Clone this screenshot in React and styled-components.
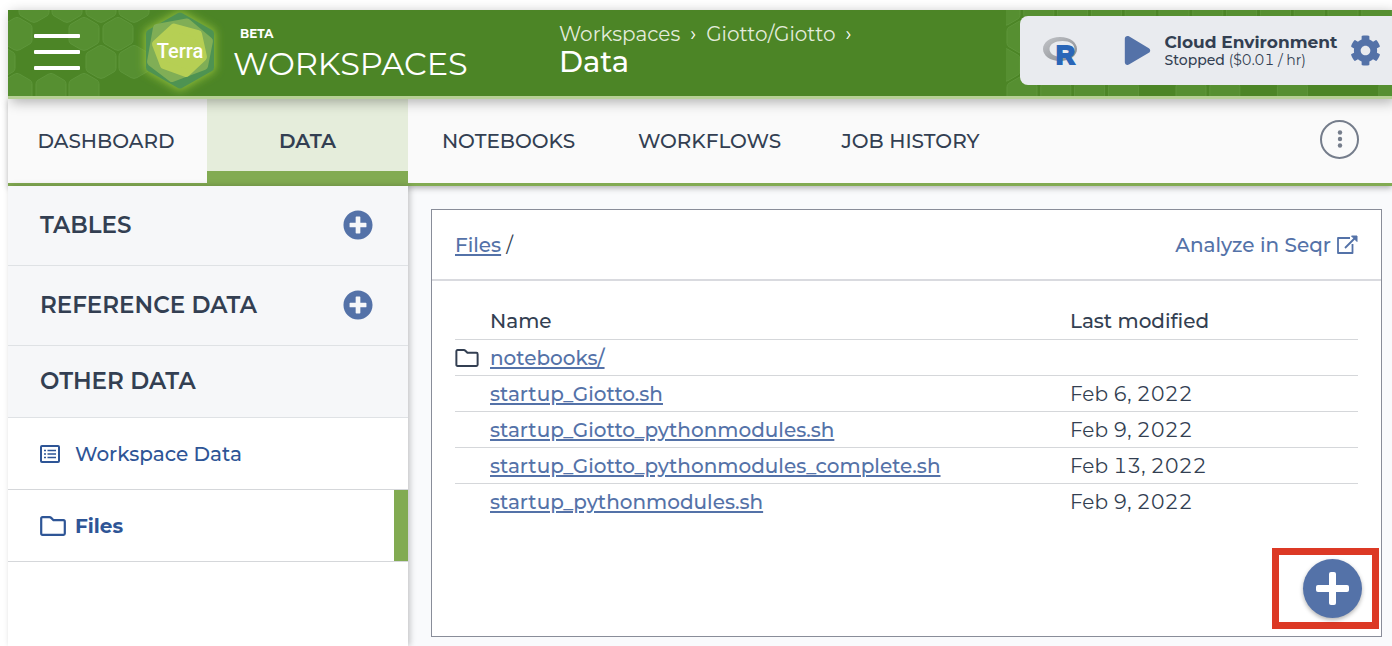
import React from 'react';
import styled, { createGlobalStyle, css } from 'styled-components';
import { FaCog, FaPlay, FaPlusCircle } from 'react-icons/fa';

const color = {
  header: '#4c8526',
  hex: '#568f31',
  hexEdge: '#5e963b',
  accent: '#82ab52',
  ink: '#333f52',
  link: '#5472a8',
  nav: '#2e5596',
  rule: '#d5d7da',
};

const GlobalStyle = createGlobalStyle`
  *, *::before, *::after { box-sizing: border-box; }
  body {
    margin: 0;
    background: #fff;
    color: ${color.ink};
    font-family: Montserrat, Inter, "Liberation Sans", sans-serif;
    font-size: 20px;
    line-height: 24px;
    font-variant-numeric: tabular-nums;
  }
  button { font: inherit; color: inherit; border: 0; background: none; padding: 0; cursor: pointer; }
  svg { display: block; flex: none; }
`;

const Page = styled.div`
  display: flex;
  flex-direction: column;
  min-height: 100vh;
  padding: 10px 0 0 8px;
`;

const Header = styled.header`
  position: relative;
  z-index: 2;
  display: flex;
  height: 89px;
  background: ${color.header};
  border-bottom: 3px solid #b7d096;
  box-shadow: 3px 3px 12px rgba(0, 0, 0, 0.3);
  color: #fff;
`;

const HexField = styled.svg`
  position: absolute;
  top: 0;
  ${(p) => (p.$side === 'right' ? 'right: 0;' : 'left: 0;')}
`;

const MenuButton = styled.button`
  position: relative;
  display: flex;
  flex-direction: column;
  justify-content: space-between;
  align-self: flex-start;
  width: 46px;
  height: 36px;
  margin: 24px 50px 0 26px;
`;

const MenuBar = styled.span`
  height: 4px;
  border-radius: 1px;
  background: #fff;
`;

const LogoLink = styled.a`
  position: relative;
  width: 100px;
  height: 86px;
`;

const Brand = styled.div`
  display: flex;
  flex-direction: column;
  width: 329px;
  padding: 16px 0 0 3px;
`;

const Beta = styled.span`
  padding-left: 7px;
  font-size: 12px;
  line-height: 16px;
  font-weight: 700;
`;

const BrandName = styled.span`
  font-size: 32px;
  line-height: 44px;
`;

const Crumbs = styled.nav`
  display: flex;
  flex: 1;
  flex-direction: column;
  padding-top: 12px;
`;

const CrumbPath = styled.div`
  display: flex;
  gap: 10px;
`;

const CrumbLink = styled.a`
  color: #e3ecdc;
  text-decoration: none;
`;

const CrumbTitle = styled.h1`
  margin: 0;
  font-size: 29px;
  line-height: 32px;
  font-weight: 500;
`;

const CloudPanel = styled.section`
  position: relative;
  display: flex;
  align-items: center;
  align-self: flex-start;
  width: 372px;
  height: 69px;
  margin-top: 6px;
  padding: 0 11px 0 22px;
  border-radius: 8px 0 0 8px;
  background: #e9ebef;
  color: ${color.ink};
`;

const IconButton = styled.button`
  display: flex;
  color: ${color.link};
`;

const CloudActions = styled.div`
  display: flex;
  align-items: center;
  justify-content: space-between;
  flex: 1;
  margin-left: 44px;
`;

const CloudText = styled.div`
  display: flex;
  flex-direction: column;
`;

const CloudTitle = styled.strong`
  font-size: 17px;
  line-height: 18px;
  font-weight: 700;
`;

const CloudStatus = styled.span`
  font-size: 14px;
  line-height: 18px;
  font-weight: 500;
`;

const CloudCost = styled.span`
  font-weight: 400;
`;

const TabBar = styled.nav`
  position: relative;
  z-index: 1;
  display: flex;
  align-items: stretch;
  height: 87px;
  padding-right: 33px;
  background: #fafafa;
  border-bottom: 3px solid ${color.accent};
  box-shadow: 0 2px 6px rgba(0, 0, 0, 0.3);
`;

const Tab = styled.a`
  display: flex;
  align-items: center;
  justify-content: center;
  width: 201px;
  color: ${color.ink};
  font-weight: 500;
  text-decoration: none;
  &:first-child { width: 199px; padding-right: 3px; }
  ${(p) =>
    p.$active &&
    css`
      padding: 12px 0 0;
      background: #e5eddb;
      border-bottom: 12px solid ${color.accent};
      font-weight: 600;
    `}
`;

const MoreButton = styled.button`
  display: flex;
  align-items: center;
  justify-content: center;
  align-self: center;
  width: 39px;
  height: 39px;
  margin: 0 0 4px auto;
  border: 2px solid #757d8b;
  border-radius: 50%;
  color: #757d8b;
`;

const Body = styled.div`
  display: flex;
  flex: 1;
`;

const Sidebar = styled.aside`
  position: relative;
  z-index: 1;
  width: 400px;
  background: #fff;
  box-shadow: 2px 0 6px rgba(0, 0, 0, 0.22);
`;

const SideHeading = styled.div`
  display: flex;
  align-items: center;
  justify-content: space-between;
  height: ${(p) => (p.$compact ? 72 : 80)}px;
  padding: 0 35px 2px 32px;
  background: #f6f7f9;
  border-bottom: 1px solid #dfe2e5;
`;

const SideTitle = styled.h2`
  margin: 0;
  font-size: 23px;
  line-height: 28px;
  font-weight: 600;
`;

const SideItem = styled.a`
  display: grid;
  grid-template-columns: 35px 1fr;
  align-items: center;
  height: 72px;
  padding-left: 32px;
  border-bottom: 1px solid ${color.rule};
  background: ${(p) => (p.$active ? `linear-gradient(${color.accent}, ${color.accent}) right / 14px 100% no-repeat` : 'none')};
  color: ${color.nav};
  font-weight: ${(p) => (p.$active ? 700 : 500)};
  text-decoration: none;
`;

const Main = styled.main`
  display: flex;
  flex: 1;
  padding: 23px 10px 9px 23px;
  background: #f9fafc;
`;

const Panel = styled.section`
  position: relative;
  flex: 1;
  border: 1px solid #898d99;
  background: #fff;
`;

const PanelHead = styled.div`
  display: flex;
  align-items: center;
  justify-content: space-between;
  height: 71px;
  padding: 0 23px;
  border-bottom: 2px solid #d9dadf;
`;

const TextLink = styled.a`
  color: ${color.link};
  font-weight: 500;
  text-decoration-thickness: 2px;
  text-underline-offset: 2px;
`;

const SeqrLink = styled.a`
  display: flex;
  align-items: center;
  gap: 6px;
  color: ${color.link};
  font-weight: 500;
  text-decoration: none;
`;

const TableArea = styled.div`
  padding: 22px 23px 100px;
`;

const FileTable = styled.table`
  width: 100%;
  border-collapse: collapse;
  table-layout: fixed;
`;

const FileRow = styled.tr`
  height: 36px;
  & + & { border-top: 1px solid ${color.rule}; }
`;

const Cell = styled.td`
  padding: 1px 0 0;
  text-align: left;
`;

const ColHead = styled.th`
  width: ${(p) => p.$width || 'auto'};
  height: 36px;
  padding: 0;
  border-bottom: 1px solid ${color.rule};
  text-align: left;
  font-weight: 500;
`;

const Highlight = styled.div`
  position: absolute;
  right: 2px;
  bottom: 7px;
  display: flex;
  align-items: center;
  justify-content: flex-end;
  width: 107px;
  height: 81px;
  padding-right: 10px;
  border: 7px solid #dc3925;
`;

const AddButton = styled.button`
  display: flex;
  align-items: center;
  justify-content: center;
  width: 59px;
  height: 59px;
  border-radius: 50%;
  background: ${color.link};
  box-shadow: 0 2px 4px rgba(0, 0, 0, 0.3);
`;

const HEX = 'M0 -16.5 Q1.5 -16.5 3 -15.6 L13 -9.8 Q15 -8.6 15 -6.4 V6.4 Q15 8.6 13 9.8 L3 15.6 Q0 17.2 -3 15.6 L-13 9.8 Q-15 8.6 -15 6.4 V-6.4 Q-15 -8.6 -13 -9.8 L-3 -15.6 Q-1.5 -16.5 0 -16.5 Z';

const leftHexes = [
  [26, -4], [59, -4], [93, -4], [126, -4],
  [9, 24], [76, 24], [110, 24],
  [-8, 52], [93, 52], [126, 52],
  [9, 80], [43, 80], [76, 80],
];

const rightHexes = [
  ...Array.from({ length: 13 }, (_, i) => [-1 + i * 33.8, -1]),
  [16, 27], [-1, 55],
  ...[0, 1, 2, 3, 5, 6, 8, 11].map((i) => [16 + i * 33.8, 83]),
];

function Hexes({ side, width, cells }) {
  return (
    <HexField $side={side} width={width} height="86" aria-hidden="true">
      {cells.map(([x, y]) => (
        <path key={`${x},${y}`} d={HEX} transform={`translate(${x} ${y})`} fill={color.hex} stroke={color.hexEdge} />
      ))}
    </HexField>
  );
}

function TerraLogo() {
  return (
    <svg width="100" height="86" viewBox="130 10 100 86" role="img" aria-label="Terra">
      <defs>
        <filter id="glow" x="-30%" y="-30%" width="160%" height="160%">
          <feGaussianBlur stdDeviation="4.5" />
        </filter>
      </defs>
      <path d="M180 13 213 32V69L180 88 147 69V32Z" fill="#8fbb38" stroke="#8fbb38" strokeWidth="5" strokeLinejoin="round" filter="url(#glow)" />
      <g strokeLinejoin="round" strokeWidth="8">
        <path d="M180 16.500 210 33.500V67.500L180 84.500 150 67.500V33.500Z" fill="#4e9352" stroke="#4e9352" />
        <path d="M187 22.500 209 41 204 66 172 78 151 62 157 28Z" fill="#80ae56" stroke="#80ae56" />
        <path d="M174 27.500 198 34 203 57 186 73 164 65 156 44Z" fill="#b6cf54" stroke="#b6cf54" />
      </g>
      <text x="180" y="58" textAnchor="middle" fill="#fff" fontFamily="Roboto, sans-serif" fontSize="20" fontWeight="500">Terra</text>
    </svg>
  );
}

function RLogo() {
  return (
    <svg width="37" height="40" viewBox="0 -5 37 40" role="img" aria-label="R">
      <defs>
        <linearGradient id="ring" x1="0" y1="0" x2="1" y2="1">
          <stop offset="0" stopColor="#c3c5c9" />
          <stop offset="1" stopColor="#85888d" />
        </linearGradient>
      </defs>
      <path fillRule="evenodd" fill="url(#ring)" d="M18 1C8 1 1 6.500 1 13S8 25 18 25 35 19.500 35 13 28 1 18 1ZM20.500 5C28 5 32.500 8 32.500 13S28 21 20.500 21 7.500 18 7.500 13 13 5 20.500 5Z" />
      <text x="14" y="28" fill="#2a66b8" stroke="#2a66b8" strokeWidth="2" fontFamily="Liberation Sans, sans-serif" fontSize="26" fontWeight="700">R</text>
    </svg>
  );
}

function FolderIcon({ width, height }) {
  return (
    <svg width={width} height={height} viewBox="0 0 26 20" fill="none" stroke="currentColor" strokeWidth="2.200" strokeLinejoin="round" aria-hidden="true">
      <path d="M1.200 2.500Q1.200 1.200 2.500 1.200H9.500Q10.500 1.200 11.200 1.900L13.500 4.200H23.500Q24.800 4.200 24.800 5.700V17.500Q24.800 18.800 23.500 18.800H2.500Q1.200 18.800 1.200 17.500Z" />
    </svg>
  );
}

function ListIcon() {
  return (
    <svg width="20" height="18" viewBox="0 0 20 18" fill="none" stroke="currentColor" strokeWidth="2" aria-hidden="true">
      <rect x="1" y="1" width="18" height="16" rx="1" />
      <path strokeWidth="1.500" d="M4 5.500H6M4 9H6M4 12.500H6M7.500 5.500H16M7.500 9H16M7.500 12.500H16" />
    </svg>
  );
}

function PopOutIcon() {
  return (
    <svg width="21" height="19" viewBox="0 0 21 19" fill="none" stroke="currentColor" strokeWidth="1.800" strokeLinejoin="round" aria-hidden="true">
      <path d="M13 3H1V18H15.500V9M8 13 18 3" />
      <path d="M14.500 1H20V6.500Z" fill="currentColor" strokeWidth="1" />
    </svg>
  );
}

const tabs = ['DASHBOARD', 'DATA', 'NOTEBOOKS', 'WORKFLOWS', 'JOB HISTORY'];

const files = [
  { name: 'notebooks/', folder: true },
  { name: 'startup_Giotto.sh', date: 'Feb 6, 2022' },
  { name: 'startup_Giotto_pythonmodules.sh', date: 'Feb 9, 2022' },
  { name: 'startup_Giotto_pythonmodules_complete.sh', date: 'Feb 13, 2022' },
  { name: 'startup_pythonmodules.sh', date: 'Feb 9, 2022' },
];

export default function App() {
  return (
    <Page>
      <GlobalStyle />
      <Header>
        <Hexes side="left" width="142" cells={leftHexes} />
        <Hexes side="right" width="386" cells={rightHexes} />
        <MenuButton aria-label="Menu">
          <MenuBar />
          <MenuBar />
          <MenuBar />
        </MenuButton>
        <LogoLink href="#home">
          <TerraLogo />
        </LogoLink>
        <Brand>
          <Beta>BETA</Beta>
          <BrandName>WORKSPACES</BrandName>
        </Brand>
        <Crumbs aria-label="Breadcrumb">
          <CrumbPath>
            <CrumbLink href="#workspaces">Workspaces</CrumbLink>
            <span>›</span>
            <CrumbLink href="#giotto">Giotto/Giotto</CrumbLink>
            <span>›</span>
          </CrumbPath>
          <CrumbTitle>Data</CrumbTitle>
        </Crumbs>
        <CloudPanel>
          <RLogo />
          <CloudActions>
            <IconButton aria-label="Start environment">
              <FaPlay size={29} />
            </IconButton>
            <CloudText>
              <CloudTitle>Cloud Environment</CloudTitle>
              <CloudStatus>
                Stopped <CloudCost>($0.01 / hr)</CloudCost>
              </CloudStatus>
            </CloudText>
            <IconButton aria-label="Environment settings">
              <FaCog size={31} />
            </IconButton>
          </CloudActions>
        </CloudPanel>
      </Header>
      <TabBar aria-label="Workspace">
        {tabs.map((t) => (
          <Tab key={t} href={`#${t.toLowerCase().replace(' ', '-')}`} $active={t === 'DATA'}>
            {t}
          </Tab>
        ))}
        <MoreButton aria-label="More actions">
          <svg width="6" height="18" viewBox="0 0 6 18" fill="currentColor">
            <circle cx="3" cy="2.500" r="2.200" />
            <circle cx="3" cy="9" r="2.200" />
            <circle cx="3" cy="15.500" r="2.200" />
          </svg>
        </MoreButton>
      </TabBar>
      <Body>
        <Sidebar>
          <SideHeading>
            <SideTitle>TABLES</SideTitle>
            <IconButton aria-label="Add table">
              <FaPlusCircle size={30} />
            </IconButton>
          </SideHeading>
          <SideHeading>
            <SideTitle>REFERENCE DATA</SideTitle>
            <IconButton aria-label="Add reference data">
              <FaPlusCircle size={30} />
            </IconButton>
          </SideHeading>
          <SideHeading $compact>
            <SideTitle>OTHER DATA</SideTitle>
          </SideHeading>
          <SideItem href="#workspace-data">
            <ListIcon />
            Workspace Data
          </SideItem>
          <SideItem href="#files" $active>
            <FolderIcon width={26} height={20} />
            Files
          </SideItem>
        </Sidebar>
        <Main>
          <Panel>
            <PanelHead>
              <span>
                <TextLink href="#files">Files</TextLink> /
              </span>
              <SeqrLink href="#seqr">
                Analyze in Seqr
                <PopOutIcon />
              </SeqrLink>
            </PanelHead>
            <TableArea>
              <FileTable>
                <thead>
                  <tr>
                    <ColHead $width="35px" aria-label="Type" />
                    <ColHead>Name</ColHead>
                    <ColHead $width="288px">Last modified</ColHead>
                  </tr>
                </thead>
                <tbody>
                  {files.map((f) => (
                    <FileRow key={f.name}>
                      <Cell>{f.folder && <FolderIcon width={24} height={18} />}</Cell>
                      <Cell>
                        <TextLink href={`#${f.name}`}>{f.name}</TextLink>
                      </Cell>
                      <Cell>{f.date}</Cell>
                    </FileRow>
                  ))}
                </tbody>
              </FileTable>
            </TableArea>
            <Highlight>
              <AddButton aria-label="Upload file">
                <svg width="33" height="33" viewBox="0 0 33 33" fill="#fff">
                  <rect x="13" y="0" width="7" height="33" rx="2" />
                  <rect x="0" y="13" width="33" height="7" rx="2" />
                </svg>
              </AddButton>
            </Highlight>
          </Panel>
        </Main>
      </Body>
    </Page>
  );
}
